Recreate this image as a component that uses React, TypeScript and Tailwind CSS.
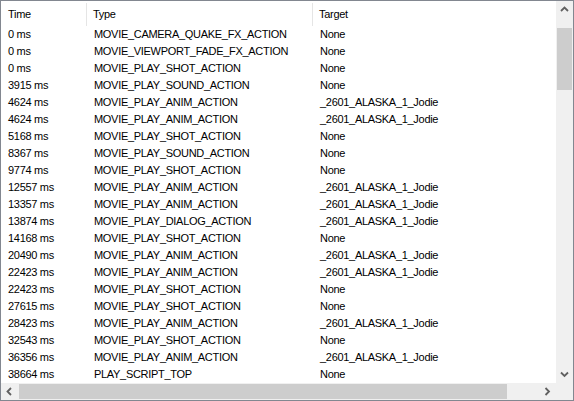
import React from 'react';

interface Row {
  time: string;
  type: string;
  target: string;
}

const JODIE = '_2601_ALASKA_1_Jodie';

const rows: Row[] = [
  { time: '0 ms', type: 'MOVIE_CAMERA_QUAKE_FX_ACTION', target: 'None' },
  { time: '0 ms', type: 'MOVIE_VIEWPORT_FADE_FX_ACTION', target: 'None' },
  { time: '0 ms', type: 'MOVIE_PLAY_SHOT_ACTION', target: 'None' },
  { time: '3915 ms', type: 'MOVIE_PLAY_SOUND_ACTION', target: 'None' },
  { time: '4624 ms', type: 'MOVIE_PLAY_ANIM_ACTION', target: JODIE },
  { time: '4624 ms', type: 'MOVIE_PLAY_ANIM_ACTION', target: JODIE },
  { time: '5168 ms', type: 'MOVIE_PLAY_SHOT_ACTION', target: 'None' },
  { time: '8367 ms', type: 'MOVIE_PLAY_SOUND_ACTION', target: 'None' },
  { time: '9774 ms', type: 'MOVIE_PLAY_SHOT_ACTION', target: 'None' },
  { time: '12557 ms', type: 'MOVIE_PLAY_ANIM_ACTION', target: JODIE },
  { time: '13357 ms', type: 'MOVIE_PLAY_ANIM_ACTION', target: JODIE },
  { time: '13874 ms', type: 'MOVIE_PLAY_DIALOG_ACTION', target: JODIE },
  { time: '14168 ms', type: 'MOVIE_PLAY_SHOT_ACTION', target: 'None' },
  { time: '20490 ms', type: 'MOVIE_PLAY_ANIM_ACTION', target: JODIE },
  { time: '22423 ms', type: 'MOVIE_PLAY_ANIM_ACTION', target: JODIE },
  { time: '22423 ms', type: 'MOVIE_PLAY_SHOT_ACTION', target: 'None' },
  { time: '27615 ms', type: 'MOVIE_PLAY_SHOT_ACTION', target: 'None' },
  { time: '28423 ms', type: 'MOVIE_PLAY_ANIM_ACTION', target: JODIE },
  { time: '32543 ms', type: 'MOVIE_PLAY_SHOT_ACTION', target: 'None' },
  { time: '36356 ms', type: 'MOVIE_PLAY_ANIM_ACTION', target: JODIE },
  { time: '38664 ms', type: 'PLAY_SCRIPT_TOP', target: 'None' },
];

const Chevron: React.FC<{ dir: 'up' | 'down' | 'left' | 'right' }> = ({ dir }) => {
  const points = {
    up: '1,5 4.5,1.5 8,5',
    down: '1,1.5 4.5,5 8,1.5',
    left: '5,1 1.5,4.5 5,8',
    right: '1.5,1 5,4.5 1.5,8',
  }[dir];
  const vertical = dir === 'up' || dir === 'down';
  return (
    <svg width={vertical ? 9 : 7} height={vertical ? 7 : 9} viewBox={vertical ? '0 0 9 7' : '0 0 7 9'}>
      <polyline points={points} fill="none" stroke="#606060" strokeWidth="1.8" />
    </svg>
  );
};

export default function App() {
  return (
    <div
      className="w-[574px] h-[401px] border border-[#828790] bg-white grid grid-cols-[555px_17px] grid-rows-[382px_17px] text-[11px] tracking-[-0.3px] text-black overflow-hidden"
      style={{ fontFamily: '"Liberation Sans", Arial, sans-serif' }}
    >
      {/* List */}
      <div className="flex flex-col">
        <div className="flex h-[25px] items-center">
          <div className="w-[86px] h-[23px] pl-[7px] flex items-center border-r border-[#e5e5e5] mt-[1px]">Time</div>
          <div className="w-[226px] h-[23px] pl-[6px] flex items-center border-r border-[#e5e5e5] mt-[1px]">Type</div>
          <div className="flex-1 h-[23px] pl-[6px] flex items-center mt-[1px]">Target</div>
        </div>
        {rows.map((r, i) => (
          <div key={i} className="flex h-[17px] items-center leading-none">
            <div className="w-[87px] pl-[7px]">{r.time}</div>
            <div className="w-[226px] pl-[6px] whitespace-nowrap">{r.type}</div>
            <div className="flex-1 pl-[6px] whitespace-nowrap">{r.target}</div>
          </div>
        ))}
      </div>

      {/* Vertical scrollbar */}
      <div className="bg-[#f0f0f0] flex flex-col items-center">
        <div className="h-[17px] w-full flex items-center justify-center">
          <Chevron dir="up" />
        </div>
        <div className="flex-1 w-full px-[1px] pt-[10px]">
          <div className="h-[62px] bg-[#cdcdcd]" />
        </div>
        <div className="h-[17px] w-full flex items-center justify-center">
          <Chevron dir="down" />
        </div>
      </div>

      {/* Horizontal scrollbar */}
      <div className="bg-[#f0f0f0] flex items-center">
        <div className="w-[17px] h-full flex items-center justify-center">
          <Chevron dir="left" />
        </div>
        <div className="flex-1 h-full py-[1px] pl-[1px] pr-[32px]">
          <div className="h-full bg-[#cdcdcd]" />
        </div>
        <div className="w-[17px] h-full flex items-center justify-center">
          <Chevron dir="right" />
        </div>
      </div>
      <div className="bg-[#f0f0f0]" />
    </div>
  );
}
